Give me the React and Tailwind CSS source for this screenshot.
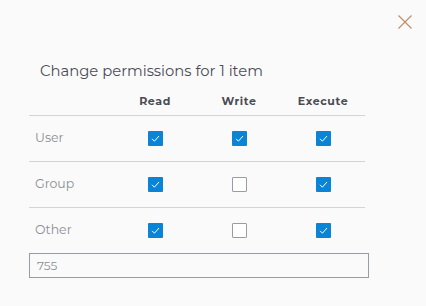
import React from 'react';

const rows = [
  { name: 'User', perms: [true, true, true] },
  { name: 'Group', perms: [true, false, true] },
  { name: 'Other', perms: [true, false, true] },
];

const Check = ({ on }) =>
  on ? (
    <span className="w-[15px] h-[15px] rounded-[1px] bg-[#0a84d6] flex items-center justify-center">
      <svg width="11" height="11" viewBox="0 0 11 11" fill="none">
        <path d="M2 5.8 L4.4 8.2 L9 3" stroke="#fff" strokeWidth="1" />
      </svg>
    </span>
  ) : (
    <span className="w-[15px] h-[15px] rounded-[1px] border-[1.5px] border-[#9a9ca3] bg-white"></span>
  );

const App = () => {
  return (
    <div className="w-[426px] h-[306px] bg-[#fafafa] relative font-['Montserrat','Open_Sans',sans-serif]">
      {/* Close */}
      <button className="absolute left-[398px] top-[15px] w-[14px] h-[14px]">
        <svg width="14" height="14" viewBox="0 0 14 14" fill="none">
          <path d="M0.5 0.5 L13.5 13.5 M13.5 0.5 L0.5 13.5" stroke="#c08a62" strokeWidth="1.1" />
        </svg>
      </button>

      <div className="pt-[59px] pl-[29px]">
        <h2 className="pl-[11px] text-[14.8px] leading-[24px] text-[#4a4c55]">
          Change permissions for 1 item
        </h2>

        <div className="w-[336px] mt-[4px]">
          <div className="grid grid-cols-4 h-[29px] items-end pb-[6px] border-b border-[#d4d4d4] text-[11px] font-bold text-[#4a4c55] tracking-[0.6px]">
            <span></span>
            <span className="text-center">Read</span>
            <span className="text-center">Write</span>
            <span className="text-center">Execute</span>
          </div>
          {rows.map((r, i) => (
            <div
              key={r.name}
              className={`grid grid-cols-4 items-center ${i < 2 ? 'h-[46px] border-b border-[#d4d4d4]' : 'h-[45px]'}`}
            >
              <span className="pl-[6px] text-[12.5px] text-[#8d8f96]">{r.name}</span>
              {r.perms.map((p, j) => (
                <span key={j} className="flex justify-center">
                  <Check on={p} />
                </span>
              ))}
            </div>
          ))}
        </div>

        <div className="w-[340px] h-[25px] border border-[#9a9ca3] bg-[#fafafa] flex items-center pl-[7px] text-[12px] text-[#8d8f96]">
          755
        </div>
      </div>
    </div>
  );
};

export default App;
